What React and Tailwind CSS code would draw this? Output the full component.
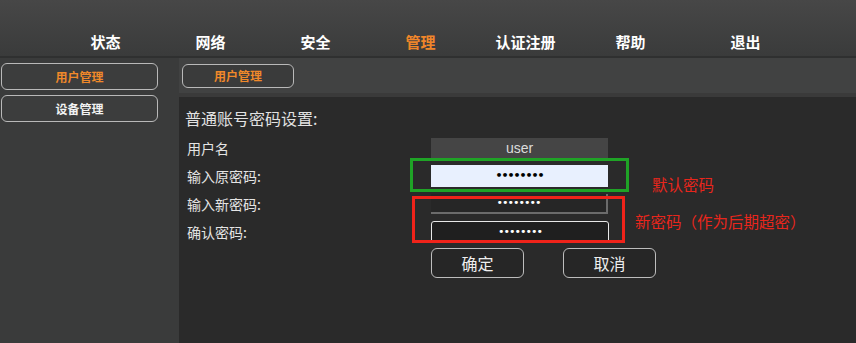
const cjk = { fontFamily: '"Noto Sans CJK SC", "Liberation Sans", sans-serif' };

const navItems = ["状态", "网络", "安全", "管理", "认证注册", "帮助", "退出"];

function SideButton({ label, active }) {
  return (
    <button
      className={`w-[157px] h-[27px] ml-[1px] rounded-md border border-[#b9b9b9] bg-[#3c3d3d] text-[12px] font-bold ${
        active ? "text-[#f0892a]" : "text-[#f2f2f2]"
      }`}
    >
      {label}
    </button>
  );
}

function Row({ label, children }) {
  return (
    <div className="flex items-center h-[28px]">
      <div className="w-[244px] text-[14px] text-[#e4e4e4] leading-[20px]">{label}</div>
      {children}
    </div>
  );
}

export default function App() {
  return (
    <div className="relative w-[856px] h-[343px] overflow-hidden bg-[#2a2a2a] flex flex-col" style={cjk}>
      {/* top nav */}
      <div className="h-[58px] bg-gradient-to-b from-[#474747] to-[#3a3b3b] border-b-2 border-[#2f3030] flex pt-[31px] pl-[53px]">
        {navItems.map((item, i) => (
          <div
            key={item}
            className={`w-[105px] text-center text-[15px] leading-[22px] font-bold ${
              i === 3 ? "text-[#f0862a]" : "text-white"
            } ${i === 6 ? "ml-[10px]" : ""}`}
          >
            {item}
          </div>
        ))}
      </div>

      <div className="flex flex-1">
        {/* sidebar */}
        <div className="w-[179px] bg-[#3a3b3b] flex flex-col gap-[5px] pt-[5px]">
          <SideButton label="用户管理" active />
          <SideButton label="设备管理" />
        </div>

        {/* main */}
        <div className="flex-1 flex flex-col">
          <div className="h-[39px] bg-[#414242] border-b-4 border-[#3a3a3a] pl-[3px] pt-[4px]">
            <button className="w-[112px] h-[24px] rounded-md border border-[#b9b9b9] bg-[#3a3b3b] text-[12px] font-bold text-[#f0892a]">
              用户管理
            </button>
          </div>
          <div className="flex-1 bg-[#2a2a2a] pl-[8px] pt-[10px]">
            <div className="text-[16px] leading-[22px] text-[#e2e2e2] -ml-[2px]">普通账号密码设置:</div>
            <div className="mt-[5px]">
              <Row label="用户名">
                <div className="w-[177px] h-[20px] bg-[#454545] text-[#dcdcdc] text-[14px] leading-[20px] text-center" style={{ fontFamily: '"Liberation Sans", sans-serif' }}>
                  user
                </div>
              </Row>
              <Row label="输入原密码:">
                <div className="w-[177px] h-[22px] bg-[#e8f0fe] text-black text-[11px] font-bold leading-[22px] text-center tracking-[-1px]" style={{ fontFamily: '"DejaVu Sans", sans-serif' }}>
                  ••••••••
                </div>
              </Row>
              <Row label="输入新密码:">
                <div className="w-[177px] h-[20px] bg-[#262626] border-r-2 border-b-2 border-[#6b6b6b] text-white text-[11px] leading-[18px] text-center tracking-[-1px]" style={{ fontFamily: '"DejaVu Sans", sans-serif' }}>
                  ••••••••
                </div>
              </Row>
              <Row label="确认密码:">
                <div className="w-[178px] h-[22px] bg-[#1f1f1f] border border-[#e8e8e8] rounded-[3px] text-white text-[11px] leading-[20px] text-center tracking-[-1px]" style={{ fontFamily: '"DejaVu Sans", sans-serif' }}>
                  ••••••••
                </div>
              </Row>
            </div>
            <div className="flex gap-[39px] ml-[244px] mt-[2px]">
              <button className="w-[93px] h-[30px] rounded-md border border-[#bdbdbd] bg-[#262626] text-[16px] text-[#eeeeee]">
                确定
              </button>
              <button className="w-[93px] h-[30px] rounded-md border border-[#bdbdbd] bg-[#262626] text-[16px] text-[#eeeeee]">
                取消
              </button>
            </div>
          </div>
        </div>
      </div>

      {/* annotations */}
      <div className="absolute left-[410px] top-[158px] w-[219px] h-[34px] border-[3px] border-[#1fa326]" />
      <div className="absolute left-[412px] top-[196px] w-[213px] h-[47px] border-[3px] border-[#f0231a]" />
      <div className="absolute left-[652px] top-[173px] text-[15.5px] leading-[22px] text-[#e8261c]">默认密码</div>
      <div className="absolute left-[635px] top-[210px] text-[15.5px] leading-[22px] text-[#e8261c]">新密码（作为后期超密）</div>
    </div>
  );
}
